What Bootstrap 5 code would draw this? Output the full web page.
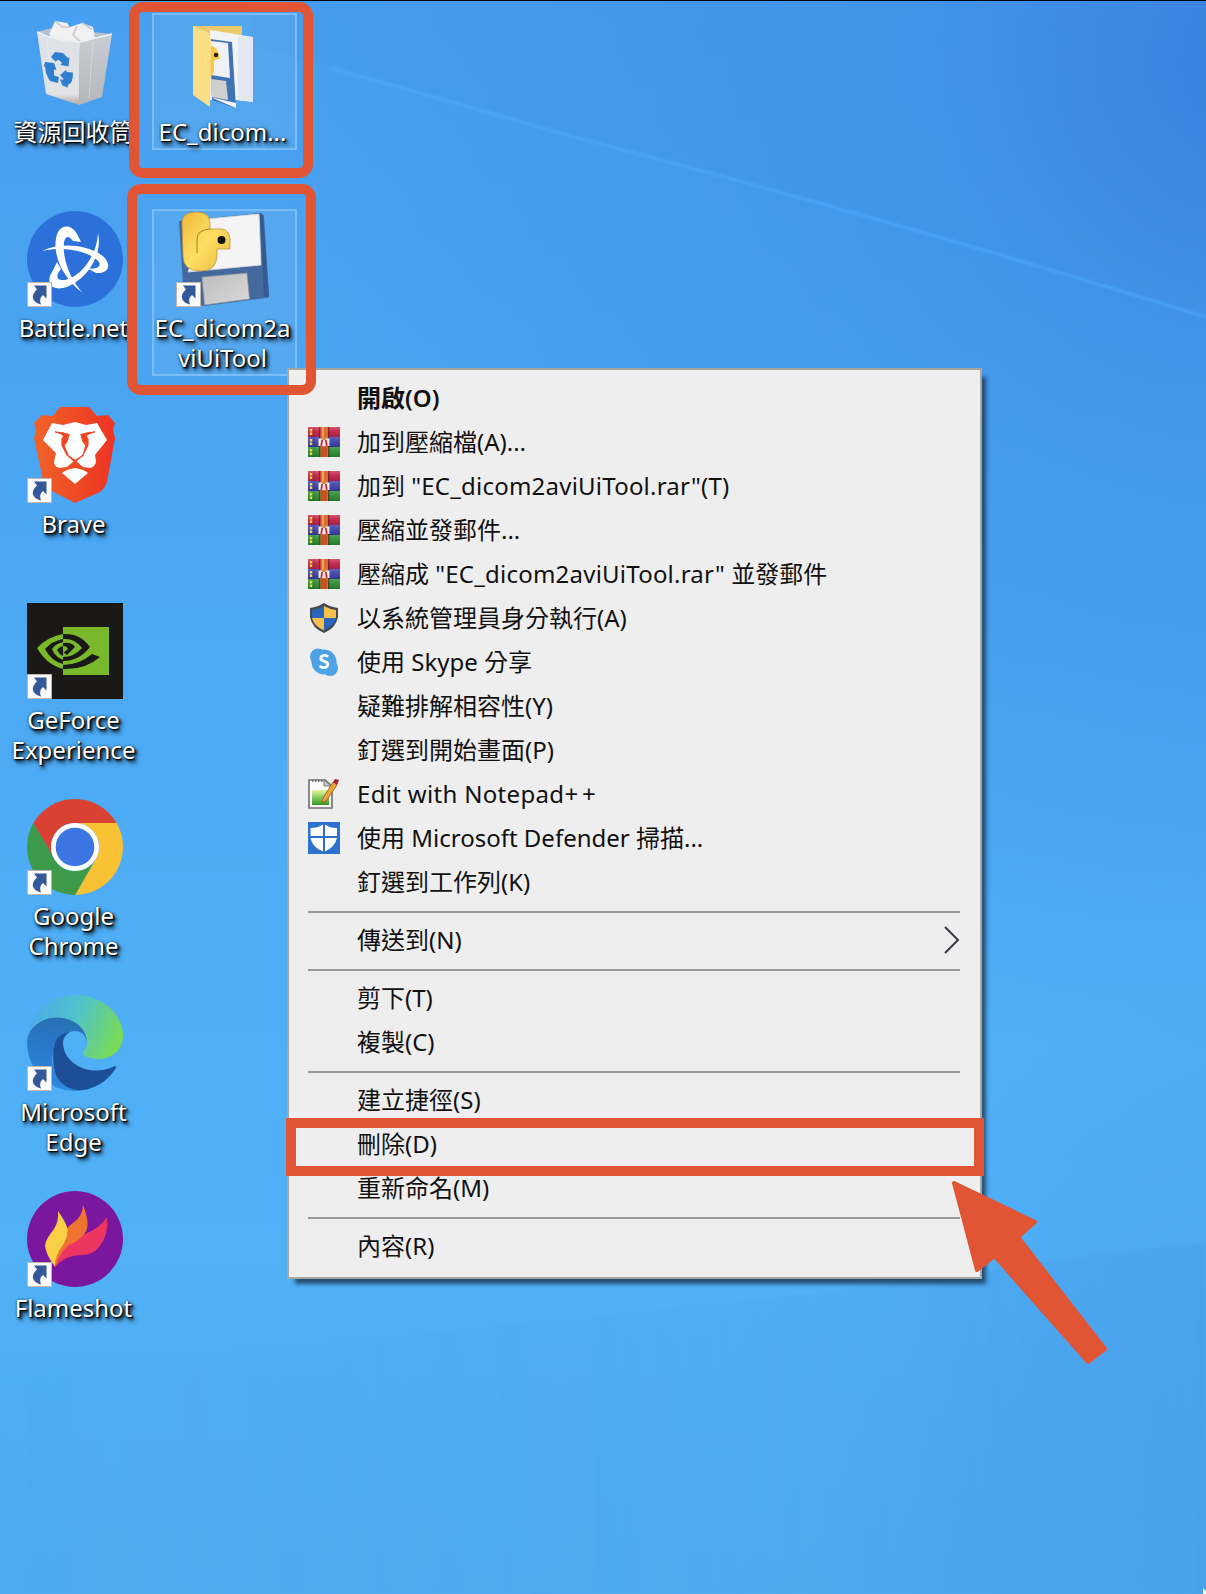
<!DOCTYPE html>
<html lang="zh-Hant">
<head>
<meta charset="utf-8">
<title>桌面</title>
<link href="https://cdn.jsdelivr.net/npm/bootstrap@5.3.0/dist/css/bootstrap.min.css" rel="stylesheet">
<style>
body{font-family:"Noto Sans","Noto Sans CJK TC",sans-serif;font-size:24px;background:#4daaf4}
.desktop{width:1206px;height:1594px;border-top:1px solid #000;background:radial-gradient(circle at 1260px 60px,#3880dc 0,rgba(64,146,232,.75) 330px,rgba(70,158,240,0) 1000px),linear-gradient(180deg,#479fef 0,#4aa5f2 400px,#4eaef6 950px,#50b1f7 1250px,#4eabee 1594px)}
.wallpaper{z-index:0}
.icon-col{width:149px;padding-top:14px;z-index:1}
.shortcut{height:196px}
.shortcut svg{width:96px;height:96px;flex:none;overflow:visible}
.caption{color:#fff;line-height:30px;margin-top:6px;text-align:center;white-space:nowrap;text-shadow:1px 1px 1px #000,2px 2px 3px rgba(0,0,0,.9),3px 4px 4px rgba(0,0,0,.7),0 0 3px rgba(0,0,0,.5)}
.icon-col .caption{margin-left:-2px}
.picked::before{content:"";position:absolute;left:3px;top:-2px;width:145px;height:137px;border:2px solid rgba(140,200,250,.7);background:rgba(150,200,235,.16)}
.picked.tall::before{height:167px}
.ctx{--bs-dropdown-font-size:24px;left:287px;top:367px;width:695px;height:911px;padding:7px 0 9px;background:#eee;border:2px solid #a9a5a1;border-radius:0;box-shadow:6px 7px 4px -2px rgba(25,55,85,.8);color:#111;font-size:24px;z-index:2}
.ctx .dropdown-item{height:44px;padding:0 19px 2px;gap:17px;color:#111;line-height:42px;background:none}
.ctx .dropdown-divider{height:2px;margin:6px 20px 6px 19px;border:0;background:#9b9b9b;opacity:1}
.glyph{width:32px;height:32px;flex:none}
.fname{letter-spacing:.22px}.plus{letter-spacing:4px}.ed{letter-spacing:.32px}
.mark-box{border:10px solid #e25534;z-index:3}
.box-a{left:129px;top:1px;width:184px;height:176px;border-radius:14px}
.box-b{left:127px;top:183px;width:189px;height:211px;border-radius:14px}
.box-c{left:286px;top:1117px;width:698px;height:58px}
.pointer-arrow{left:940px;top:1170px;z-index:4}
</style>
</head>
<body>
<svg width="0" height="0" class="position-absolute">
<defs>
<linearGradient id="edgeTop" x1="0" y1=".3" x2="1" y2=".6"><stop offset="0" stop-color="#4aa9ee"/><stop offset=".5" stop-color="#51c5c6"/><stop offset="1" stop-color="#79db52"/></linearGradient>
<linearGradient id="edgeMid" x1=".5" y1="0" x2=".4" y2="1"><stop offset="0" stop-color="#2a6fae"/><stop offset=".4" stop-color="#2877c9"/><stop offset="1" stop-color="#2d8be0"/></linearGradient>
<linearGradient id="braveG" x1="0" y1="0" x2="1" y2="0"><stop offset="0" stop-color="#ef6328"/><stop offset="1" stop-color="#ee3324"/></linearGradient>
<linearGradient id="snake" x1="0" y1="0" x2="1" y2="1"><stop offset="0" stop-color="#efb93a"/><stop offset=".5" stop-color="#fddf62"/><stop offset="1" stop-color="#edb744"/></linearGradient>
<linearGradient id="greyG" x1="0" y1="0" x2="1" y2="1"><stop offset="0" stop-color="#bdbdbd"/><stop offset="1" stop-color="#d9d9d9"/></linearGradient>
<linearGradient id="binG" x1="0" y1="0" x2="0" y2="1"><stop offset="0" stop-color="#dce2e9"/><stop offset=".85" stop-color="#e2e2e5"/><stop offset="1" stop-color="#aea5a1"/></linearGradient>
<linearGradient id="binR" x1="0" y1="0" x2="0" y2="1"><stop offset="0" stop-color="#c9ced4"/><stop offset="1" stop-color="#b4b6bb"/></linearGradient>
<linearGradient id="noteG" x1="0" y1="0" x2="0" y2="1"><stop offset="0" stop-color="#e6f7a0"/><stop offset="1" stop-color="#2f9a1e"/></linearGradient>
<linearGradient id="rG" x1="0" y1="0" x2="0" y2="1"><stop offset="0" stop-color="#d4566e"/><stop offset=".4" stop-color="#c93050"/><stop offset="1" stop-color="#a3213f"/></linearGradient>
<linearGradient id="bG" x1="0" y1="0" x2="0" y2="1"><stop offset="0" stop-color="#5a5fc4"/><stop offset="1" stop-color="#33368f"/></linearGradient>
<linearGradient id="gG" x1="0" y1="0" x2="0" y2="1"><stop offset="0" stop-color="#4fa34f"/><stop offset="1" stop-color="#227a2c"/></linearGradient>
<linearGradient id="lowG" x1="0" y1="0" x2="1" y2="0"><stop offset="0" stop-color="#479ee6" stop-opacity=".03"/><stop offset=".6" stop-color="#479ee6" stop-opacity=".12"/><stop offset="1" stop-color="#479ee6" stop-opacity=".42"/></linearGradient>
<radialGradient id="cornerG" gradientUnits="userSpaceOnUse" cx="1300" cy="1450" r="480"><stop offset="0" stop-color="#4294e8" stop-opacity=".5"/><stop offset="1" stop-color="#4294e8" stop-opacity="0"/></radialGradient>
<filter id="soft"><feGaussianBlur stdDeviation="1.3"/></filter>
<symbol id="lnk" viewBox="0 0 25 25"><path d="M.5.5h24v24H.5z" fill="#fafafa" stroke="#c4b5b0"/><path d="M7 3.500h12.500v13l-3.500-3.500c-3 2.500-3.500 5-2 9.500C6 20.500 2.500 14 10 7.500z" fill="#33599b"/></symbol>
<symbol id="rar" viewBox="0 0 32 32"><path d="M0 1h32v10H0z" fill="url(#rG)"/><path d="M0 11h32v10H0z" fill="url(#bG)"/><path d="M0 21h32v10H0z" fill="url(#gG)"/><path d="M11 1h1.500v30H11zM20 1h1.500v30H20z" fill="#4a1c28" opacity=".6"/><path d="M12.500 1h7.500v30h-7.500z" fill="#dd6b2c"/><path d="M14 1h2v11h-2z" fill="#f0a25a"/><path d="M10.500 12.500h11V20h-11z" fill="#f1ece8"/><path d="M13.200 20l1-6M18.800 20l-1-6" fill="none" stroke="#c3292d" stroke-width="1.700"/><path d="M13.500 11h5l-1 3h-3z" fill="#e98334"/><path d="M13 21h6v10h-6z" fill="#c9521f"/><path d="M3 3v6M3 13v6M3 23v6" stroke="#f1d748" stroke-width="2.400" stroke-dasharray="2.500 1"/><path d="M6 1v30" stroke="#3a1a3a" opacity=".25"/></symbol>
</defs>
</svg>

<main class="desktop position-relative overflow-hidden d-flex align-items-start">
<svg class="wallpaper position-absolute top-0 start-0" width="1206" height="1593" viewBox="0 1 1206 1593">
<path d="M250 45Q420 92 560 133Q900 222 1206 317V0H250z" fill="#3f8ce2" opacity=".13" filter="url(#soft)"/>
<path d="M330 68Q440 98 560 133Q900 222 1206 317" fill="none" stroke="#4faafb" stroke-width="3" opacity=".7" filter="url(#soft)"/>
<path d="M0 700h1206v894H0z" fill="url(#cornerG)"/>
<path d="M1206 1243Q1120 1250 1060 1260T850 1290L0 1375V1594H1206z" fill="url(#lowG)" filter="url(#soft)"/>
<path d="M1203 1588v6h3v-3z" fill="#fff"/>
</svg>

<div class="icon-col position-relative d-flex flex-column">
<div class="shortcut d-flex flex-column align-items-center">
<svg viewBox="0 0 96 96"><path d="M10 17l15-4 60 6-32 9z" fill="#b8c0ca"/><path d="M22 20l6-14 12 2 3 4 12-4 11 4 2 12-14 7-24-6z" fill="#f1f1f1"/><path d="M28 6l7 6 8 0M50 11l-4 9 9 8 10-4M55 8l10 6" fill="none" stroke="#c5c8cc" stroke-width="1.500"/><path d="M10 17q20 8 43 9l-1 64-33-11z" fill="url(#binG)"/><path d="M53 27l32-8-10 63-23 8z" fill="url(#binR)"/><path d="M10 17q20 9 43 10l32-8" fill="none" stroke="#eef2f5" stroke-width="1.500"/><path d="M20 24l5 54M66 26l-4 58" stroke="#fff" opacity=".3"/><g fill="#2f7fcf"><path d="M24 42l4-5 8 1 5 5 1.500-.5-1 9-8-1.500 1.500-2-3.500-3.500-3 2z"/><path d="M18 47l9 1 2.500 7-2.500-.5 0 6 5 1.500-1 6-8-2q-5.500-9-4.500-13l-1.500-2z"/><path d="M33 60l6-5 1 2 6 .5q0 11-4.500 12l-1 3-5-2-2.500-6 4 0z"/></g></svg>
<div class="caption">資源回收筒</div>
</div>
<div class="shortcut d-flex flex-column align-items-center">
<svg viewBox="0 0 96 96"><circle cx="48" cy="48" r="48" fill="#2c70d9"/><g fill="#fff"><path d="M54 31L50 23C45 14 36 13 31 21C24 36 31 64 56 82C44 70 35 48 37 31C39 23 43 26 46 30z"/><path d="M15 40C34 31 58 34 73 43C85 51 84 63 69 62L60 57C68 59 75 56 72 51C66 43 42 34 15 40z"/><path d="M71 22C76 44 60 68 40 76C28 80 20 75 23 65L30 51L34 58C28 65 30 69 35 69C49 70 70 48 71 22z"/></g><use href="#lnk" y="71" width="25" height="25"/></svg>
<div class="caption">Battle.net</div>
</div>
<div class="shortcut d-flex flex-column align-items-center">
<svg viewBox="0 0 96 96"><path d="M33 0H62l8 9 11-1 7 8-2 7 2 8-8 44q-2 6-7 10L48 96 23 83q-5-4-7-10L7 31l2-7-2-8 8-8 11 1z" fill="url(#braveG)"/><path d="M25 16l11 2 12-3 11 3 11-2 10 17-12 15 1 7q-1 5-6 6l-7-1-8-7-8 7-8 1q-5-2-5-6l2-9L16 33z" fill="#fff"/><path d="M28 25q8 0 14 2.500l-2 7-3 4 4 10 7 5 8-5 3-10-3-4-2-7q6-2.500 14-2.500-6 1-9 4l2 3 0 6-5 10-8 7-8-7-5-10 0-6 2-3q-3-3-9-4z" fill="#ee4625" stroke="#ee4625" stroke-width="1.200"/><path d="M48 61q-8 1-13 5l13 11 13-11q-5-4-13-5z" fill="#fff"/><use href="#lnk" y="71" width="25" height="25"/></svg>
<div class="caption">Brave</div>
</div>
<div class="shortcut d-flex flex-column align-items-center">
<svg viewBox="0 0 96 96"><path d="M0 0h96v96H0z" fill="#1b1917"/><path d="M36 24h46v48H36z" fill="#79b82b"/><path d="M36 31Q20 34 10 45Q20 62 36 66v-5Q24 58 18 46Q25 38 36 36z" fill="#79b82b"/><path d="M36 39Q28 41 25 46Q28 54 36 57v-4Q32 51 30 47Q32 44 36 43z" fill="#79b82b"/><path d="M36 31Q53 30 63 44Q52 58 36 58v-4Q47 54 55 45Q48 35 36 36z" fill="#1b1917"/><path d="M36 40Q45 39 48 44L40 52 36 49z" fill="#1b1917"/><path d="M36 43q4 0 5 3l-5 4z" fill="#79b82b"/><path d="M36 62Q52 62 65 51l8 3Q58 67 36 66z" fill="#1b1917"/><use href="#lnk" y="71" width="25" height="25"/></svg>
<div class="caption">GeForce<br>Experience</div>
</div>
<div class="shortcut d-flex flex-column align-items-center">
<svg viewBox="0 0 96 96"><path d="M6.400 24A48 48 0 0 1 89.600 24H48A24 24 0 0 0 27.200 60z" fill="#d94232"/><path d="M89.600 24A48 48 0 0 1 48 96L68.800 60A24 24 0 0 0 48 24z" fill="#f9c134"/><path d="M48 96A48 48 0 0 1 6.400 24L27.200 60A24 24 0 0 0 68.800 60z" fill="#3c9a49"/><circle cx="48" cy="48" r="24" fill="#fff"/><circle cx="48" cy="48" r="19.300" fill="#3c76e3"/><use href="#lnk" y="71" width="25" height="25"/></svg>
<div class="caption">Google<br>Chrome</div>
</div>
<div class="shortcut d-flex flex-column align-items-center">
<svg viewBox="0 0 96 96"><g transform="scale(.375)"><path d="M105.700 241.400a79.200 79.200 0 0 1-22.700-21.300A80.700 80.700 0 0 1 112.600 100c3.200-1.500 8.500-4.100 15.600-4a32.400 32.400 0 0 1 25.700 13 31.900 31.900 0 0 1 6.300 18.700c0-.2 24.500-79.600-80-79.600-43.900 0-80 41.700-80 78.200 0 19.300 4.200 38.500 12.100 56.100a128 128 0 0 0 156.400 67.100 75.500 75.500 0 0 1-62.800-8z" fill="url(#edgeMid)"/><path d="M231 190.500c-3.400 1.800-6.900 3.400-10.500 4.700a101.800 101.800 0 0 1-35.900 6.400c-47.300 0-88.500-32.500-88.500-74.300 0-11.400 6.400-21.900 16.600-27.300-42.800 1.800-42.800 46.400-42.800 72.500 0 73.900 57.100 81.400 71.800 81.400 7.900 0 19.800-2.300 27-4.600l1.300-.4a128.300 128.300 0 0 0 66.600-52.800 4 4 0 0 0-5.600-5.600z" fill="#1d4f96"/><path d="M152.300 148.900c-.8 1-3.300 2.500-3.300 5.700 0 2.600 1.700 5.100 4.700 7.200 14.400 10 41.500 8.700 41.600 8.700 10.700 0 21.100-2.900 30.300-8.300a61.400 61.400 0 0 0 30.400-52.900c.3-22.400-8-37.300-11.300-43.900C223.500 23.900 177.700 0 128 0A128 128 0 0 0 0 126.200c.5-36.500 36.800-66 80-66 3.500 0 23.500.3 42 10.100 16.300 8.500 24.900 18.900 30.800 29.100 6.200 10.600 7.300 24.100 7.300 29.500s-2.700 13.300-7.800 20z" fill="url(#edgeTop)"/></g><use href="#lnk" y="71" width="25" height="25"/></svg>
<div class="caption">Microsoft<br>Edge</div>
</div>
<div class="shortcut d-flex flex-column align-items-center">
<svg viewBox="0 0 96 96"><circle cx="48" cy="48" r="48" fill="#7b179f"/><path d="M28 76Q34 52 60 42Q74 36 80 26Q82 44 72 56Q66 64 55 64Q38 64 28 76z" fill="#ec3560"/><path d="M28 76Q28 60 35 46Q37 38 46 32Q56 25 56 14Q64 34 58 42Q52 50 42 54Q34 60 28 76z" fill="#ee7430"/><path d="M28 76Q18 62 18 54Q19 48 27 38Q32 30 31 20Q38 30 40 36Q42 44 36 54Q28 64 28 76z" fill="#f9cf46"/><use href="#lnk" y="71" width="25" height="25"/></svg>
<div class="caption">Flameshot</div>
</div>
</div>

<div class="icon-col position-relative d-flex flex-column">
<div class="shortcut picked position-relative d-flex flex-column align-items-center">
<svg class="position-relative" viewBox="0 0 96 96"><path d="M17 11h49v68H17z" fill="#ecca6c"/><path d="M34 15l43 7v65l-17-2-26 0z" fill="#f1f3f7"/><path d="M62 21l15 1v65l-15-2z" fill="#e3e7ef"/><path d="M34 24l22 3 4 66-24-8z" fill="#3f73b4"/><path d="M35 26l17 2 2 35-19-3z" fill="#eff1f5"/><path d="M35 64l15 2 2 19-16-3z" fill="#cfcfcf"/><path d="M34 82l26 6v5z" fill="#f4f4f4"/><path d="M34 30q9 3 10 14l-3 0-3 2v11q-2 4-4 5z" fill="#f6c845"/><circle cx="40" cy="40" r="2.200" fill="#222"/><path d="M17 11l14 6q4 3 4 8v8l-1 59-17-12z" fill="#fbdf86"/></svg>
<div class="caption position-relative">EC_dicom...</div>
</div>
<div class="shortcut picked tall position-relative d-flex flex-column align-items-center">
<svg class="position-relative" viewBox="0 0 96 96"><path d="M3 10L84 2q3 0 4 3l5 80q0 2-3 2L28 95 8 90z" fill="#44699f"/><path d="M87 5l6 80-5 1L84 3z" fill="#345b91"/><path d="M30 8L83 3l2 51-73 7z" fill="#f4f4f4" stroke="#dcdcdc" stroke-width=".8"/><path d="M26 66l45-4 2.500 26-45 6z" fill="url(#greyG)" stroke="#8c8c8c" stroke-width=".6"/><path d="M6 12Q6 1 20 1Q34 1 34 12V18h12q7 1 8 10v10H41v7Q40 60 25 60Q7 60 7 45z" fill="url(#snake)" stroke="#b68d32" stroke-width=".7"/><path d="M34 18Q21 19 21 28V42" fill="none" stroke="#a37c28"/><circle cx="45.500" cy="29" r="4" fill="#111"/><use href="#lnk" y="71" width="25" height="25"/></svg>
<div class="caption position-relative">EC_dicom2a<br>viUiTool</div>
</div>
</div>

<div class="ctx dropdown-menu show">
<a class="dropdown-item d-flex align-items-center fw-semibold"><span class="glyph"></span><span>開啟(O)</span></a>
<a class="dropdown-item d-flex align-items-center"><svg class="glyph"><use href="#rar"/></svg><span>加到壓縮檔(A)...</span></a>
<a class="dropdown-item d-flex align-items-center"><svg class="glyph"><use href="#rar"/></svg><span>加到 <span class="fname">"EC_dicom2aviUiTool.rar"(T)</span></span></a>
<a class="dropdown-item d-flex align-items-center"><svg class="glyph"><use href="#rar"/></svg><span>壓縮並發郵件...</span></a>
<a class="dropdown-item d-flex align-items-center"><svg class="glyph"><use href="#rar"/></svg><span>壓縮成 <span class="fname">"EC_dicom2aviUiTool.rar"</span> 並發郵件</span></a>
<a class="dropdown-item d-flex align-items-center"><svg class="glyph" viewBox="0 0 32 32"><path d="M16 1q6 4 14 5v9q-2 11-14 16Q4 26 2 15V6q8-1 14-5z" fill="#45494f"/><path d="M16 4v12H4V8q7-1 12-4z" fill="#2a64bd"/><path d="M16 4q5 3 12 4v8H16z" fill="#f6c04b"/><path d="M4 16h12v12.500Q6 24 4 16z" fill="#f6c04b"/><path d="M16 16h12q-2 8-12 12.500z" fill="#2a64bd"/></svg><span>以系統管理員身分執行(A)</span></a>
<a class="dropdown-item d-flex align-items-center"><svg class="glyph" viewBox="0 0 32 32"><circle cx="10" cy="10.500" r="8" fill="#4ba2e4"/><circle cx="22" cy="22" r="8" fill="#4ba2e4"/><circle cx="16" cy="16" r="12.500" fill="#4ba2e4"/><text x="16" y="23" text-anchor="middle" font-family="Lato" font-weight="900" font-size="20" fill="#fff">S</text></svg><span>使用 Skype 分享</span></a>
<a class="dropdown-item d-flex align-items-center"><span class="glyph"></span><span>疑難排解相容性(Y)</span></a>
<a class="dropdown-item d-flex align-items-center"><span class="glyph"></span><span>釘選到開始畫面(P)</span></a>
<a class="dropdown-item d-flex align-items-center"><svg class="glyph" viewBox="0 0 32 32"><path d="M1 2h16l7 6v22H1z" fill="#fdfdfd" stroke="#6e6e6e" stroke-width="1.600"/><path d="M4 12h17v15H4z" fill="url(#noteG)"/><path d="M4 3h12" stroke="#777" stroke-width="2" stroke-dasharray="1.500 1.500"/><path d="M16 2v6h7z" fill="#ccc" stroke="#777"/><path d="M15 20l10-16 4 3-10 15-5 3z" fill="#eba43a" stroke="#8d5d1e" stroke-width=".8"/><path d="M25 4l2-3 4 1-2 5z" fill="#a8242a"/></svg><span><span class="ed">Edit with Notepad</span><span class="plus">++</span></span></a>
<a class="dropdown-item d-flex align-items-center"><svg class="glyph" viewBox="0 0 32 32"><path d="M0 0h32v32H0z" fill="#2d71cf"/><path d="M15 2.500V14H2.500V6q7 0 12.500-3.500zM17 2.500Q22 6 29 6v8H17zM2.500 16H15v13.500Q4 25 2.500 16zM17 16h12q-2 9-12 13.500z" fill="#fff"/></svg><span>使用 Microsoft Defender 掃描...</span></a>
<a class="dropdown-item d-flex align-items-center"><span class="glyph"></span><span>釘選到工作列(K)</span></a>
<hr class="dropdown-divider">
<a class="dropdown-item d-flex align-items-center"><span class="glyph"></span><span>傳送到(N)</span><svg class="ms-auto" width="18" height="28" viewBox="0 0 18 28"><path d="M2 1l13 13L2 27" fill="none" stroke="#3c3546" stroke-width="2"/></svg></a>
<hr class="dropdown-divider">
<a class="dropdown-item d-flex align-items-center"><span class="glyph"></span><span>剪下(T)</span></a>
<a class="dropdown-item d-flex align-items-center"><span class="glyph"></span><span>複製(C)</span></a>
<hr class="dropdown-divider">
<a class="dropdown-item d-flex align-items-center"><span class="glyph"></span><span>建立捷徑(S)</span></a>
<a class="dropdown-item d-flex align-items-center"><span class="glyph"></span><span>刪除(D)</span></a>
<a class="dropdown-item d-flex align-items-center"><span class="glyph"></span><span>重新命名(M)</span></a>
<hr class="dropdown-divider">
<a class="dropdown-item d-flex align-items-center"><span class="glyph"></span><span>內容(R)</span></a>
</div>

<div class="mark-box box-a position-absolute"></div>
<div class="mark-box box-b position-absolute"></div>
<div class="mark-box box-c position-absolute"></div>
<svg class="pointer-arrow position-absolute" width="180" height="210" viewBox="940 1171 180 210"><path d="M954 1183L1035 1222 1018 1237 1105 1349 1088 1362 994.500 1256 977 1270z" fill="#e25534" stroke="#e25534" stroke-width="4" stroke-linejoin="round"/></svg>
</main>
<script src="https://cdn.jsdelivr.net/npm/bootstrap@5.3.0/dist/js/bootstrap.bundle.min.js"></script>
</body>
</html>
